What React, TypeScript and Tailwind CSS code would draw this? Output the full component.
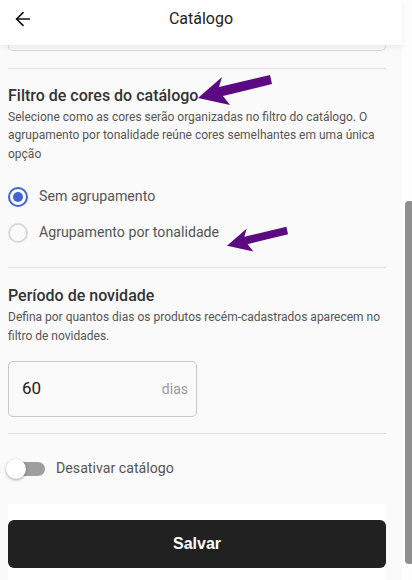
import { ArrowLeft } from "lucide-react";

function Divider() {
    return <div className="h-px bg-[#e0e0e0]" />;
}

function PurpleArrow({ className }: { className: string }) {
    // pointer drawn on top of the screenshot, tip on the left
    return (
        <svg className={className} viewBox="0 0 80 34" fill="#5c0a82">
            <polygon points="0,24 24,3 21,13 72,1 74,10 25,22 32,31" />
        </svg>
    );
}

function Radio({ checked, label }: { checked?: boolean; label: string }) {
    return (
        <label className="flex h-9 items-center gap-[11px]">
            <span
                className={
                    checked
                        ? "flex h-5 w-5 items-center justify-center rounded-full border-2 border-[#3f63d6]"
                        : "h-5 w-5 rounded-full border-2 border-[#d9d9d9]"
                }
            >
                {checked && <span className="h-[10px] w-[10px] rounded-full bg-[#3f63d6]" />}
            </span>
            <span className="text-[14.2px] text-[#555]">{label}</span>
        </label>
    );
}

export default function App() {
    return (
        <div className="flex h-[580px] w-[412px] overflow-hidden bg-[#fafafa] font-['Roboto',sans-serif]">
            <div className="flex min-w-0 flex-1 flex-col">
                <header className="relative z-10 flex h-[46px] items-center bg-white px-3 pb-[7px] shadow-[0_3px_6px_rgba(0,0,0,0.06)]">
                    <ArrowLeft className="h-[22px] w-[22px] text-[#111]" strokeWidth={1.8} />
                    <h1 className="flex-1 pr-[22px] text-center text-[16px] text-[#222]">Catálogo</h1>
                </header>

                <main className="flex flex-col pl-2 pr-4">
                    <div className="h-[6px] rounded-b-[5px] border border-t-0 border-[#d9d9d9] bg-[#fafafa]" />
                    <div className="mt-[17px]">
                        <Divider />
                    </div>

                    <section className="relative mt-[15px]">
                        <h2 className="text-[16px] leading-6 font-medium text-[#333]">Filtro de cores do catálogo</h2>
                        <PurpleArrow className="absolute top-[-10px] left-[190px] h-[34px] w-[80px]" />
                        <p className="text-[12px] leading-[18.5px] text-[#555]">
                            Selecione como as cores serão organizadas no filtro do catálogo. O agrupamento por tonalidade
                            reúne cores semelhantes em uma única opção
                        </p>
                    </section>

                    <div className="relative mt-4 flex flex-col">
                        <Radio checked label="Sem agrupamento" />
                        <Radio label="Agrupamento por tonalidade" />
                        <PurpleArrow className="absolute top-[46px] left-[219px] h-[30px] w-[66px]" />
                    </div>

                    <div className="mt-4">
                        <Divider />
                    </div>

                    <section className="mt-4">
                        <h2 className="text-[16px] leading-6 font-medium text-[#333]">Período de novidade</h2>
                        <p className="text-[12px] leading-[18.5px] text-[#555]">
                            Defina por quantos dias os produtos recém-cadastrados aparecem no filtro de novidades.
                        </p>
                    </section>

                    <div className="mt-4 flex h-14 w-[189px] items-center justify-between rounded-[5px] border border-[#c8c8c8] bg-[#fafafa] pr-2 pl-[13px]">
                        <span className="text-[17px] text-[#222]">60</span>
                        <span className="text-[14px] text-[#9a9a9a]">dias</span>
                    </div>

                    <div className="mt-4">
                        <Divider />
                    </div>

                    <div className="mt-[17px] flex h-9 items-center gap-[11px]">
                        <span className="relative flex h-5 w-[37px] items-center">
                            <span className="ml-[6px] h-[14px] w-[31px] rounded-full bg-[#9e9e9e]" />
                            <span className="absolute top-0 left-[-2px] h-5 w-5 rounded-full bg-white shadow-[0_1px_3px_rgba(0,0,0,0.35)]" />
                        </span>
                        <span className="text-[14.2px] text-[#555]">Desativar catálogo</span>
                    </div>

                    <div className="mt-[17px] bg-white pt-4 pb-3">
                        <button className="flex h-12 w-full items-center justify-center rounded-[6px] bg-[#212121] font-['Liberation_Sans',sans-serif] text-[16px] font-bold text-white">
                            Salvar
                        </button>
                    </div>
                </main>
            </div>

            <div className="flex w-[10px] flex-col bg-[#fdfdfd] pt-[201px] pb-4 pl-[3px]">
                <div className="flex-1 rounded-l-[4px] rounded-r-[1px] bg-[#8f8f8f]" />
            </div>
        </div>
    );
}
